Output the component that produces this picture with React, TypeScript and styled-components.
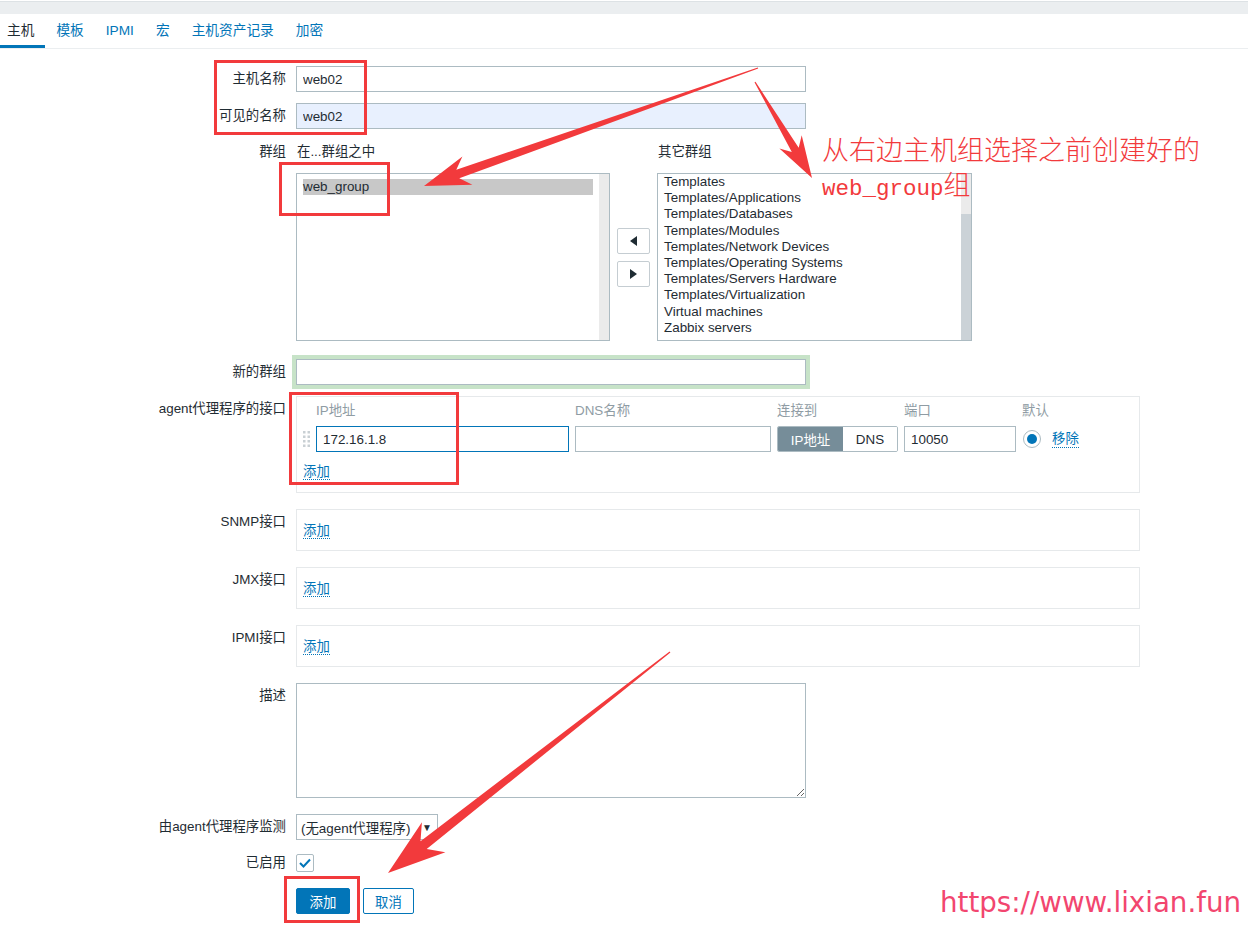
import React from 'react'
import styled, { createGlobalStyle } from 'styled-components'

const GlobalStyle = createGlobalStyle`
  html, body {
    margin: 0;
    padding: 0;
    background: #ffffff;
  }
  body {
    font-family: "Liberation Sans", Arial, "Noto Sans CJK SC", sans-serif;
    font-size: 13.4px;
    color: #1f2c33;
  }
`

const BLUE = '#0275b8'
const BORDER = '#acbbc2'
const MARK = '#f23a3c'

const tabs = ['主机', '模板', 'IPMI', '宏', '主机资产记录', '加密']
const inGroups = ['web_group']
const otherGroups = [
  'Templates',
  'Templates/Applications',
  'Templates/Databases',
  'Templates/Modules',
  'Templates/Network Devices',
  'Templates/Operating Systems',
  'Templates/Servers Hardware',
  'Templates/Virtualization',
  'Virtual machines',
  'Zabbix servers',
]

type Pt = [number, number]

// tapered arrow: thin tail, widening shaft, swept-back head
const arrowPoints = (tail: Pt, tip: Pt, shaft: number, headLen: number, headHalf: number) => {
  const dx = tip[0] - tail[0]
  const dy = tip[1] - tail[1]
  const len = Math.hypot(dx, dy)
  const ux = dx / len
  const uy = dy / len
  const nx = -uy
  const ny = ux
  const neck: Pt = [tip[0] - ux * headLen * 0.78, tip[1] - uy * headLen * 0.78]
  const barb: Pt = [tip[0] - ux * headLen, tip[1] - uy * headLen]
  const p = (b: Pt, w: number) => `${(b[0] + nx * w).toFixed(1)},${(b[1] + ny * w).toFixed(1)}`
  return [
    p(tail, 0.6),
    p(neck, shaft / 2),
    p(barb, headHalf),
    `${tip[0]},${tip[1]}`,
    p(barb, -headHalf),
    p(neck, -shaft / 2),
    p(tail, -0.6),
  ].join(' ')
}

export default function App() {
  return (
    <Page>
      <GlobalStyle />
      <TopStrip />
      <TabBar>
        <TabList>
          {tabs.map((t, i) => (
            <Tab key={t} $active={i === 0}>
              {t}
            </Tab>
          ))}
        </TabList>
      </TabBar>

      <Form>
        <Row $gap={0}>
          <Label>主机名称</Label>
          <TextInput $width={510} defaultValue="web02" />
        </Row>
        <Row $gap={11}>
          <Label>可见的名称</Label>
          <TextInput $width={510} $filled defaultValue="web02" />
        </Row>

        <Row $gap={15}>
          <Label $line={16}>群组</Label>
          <GroupGrid>
            <ListCaption>在...群组之中</ListCaption>
            <span />
            <ListCaption>其它群组</ListCaption>
            <ListBox $width={314}>
              <ListItems $padTop={5}>
                {inGroups.map((g) => (
                  <ListItem key={g} $selected>
                    {g}
                  </ListItem>
                ))}
              </ListItems>
              <ScrollTrack />
            </ListBox>
            <MoveButtons>
              <MoveButton>
                <svg width="7" height="10" viewBox="0 0 7 10">
                  <polygon points="7,0 7,10 0,5" fill="#1f2c33" />
                </svg>
              </MoveButton>
              <MoveButton>
                <svg width="7" height="10" viewBox="0 0 7 10">
                  <polygon points="0,0 0,10 7,5" fill="#1f2c33" />
                </svg>
              </MoveButton>
            </MoveButtons>
            <ListBox $width={315}>
              <ListItems $padTop={0}>
                {otherGroups.map((g) => (
                  <ListItem key={g}>{g}</ListItem>
                ))}
              </ListItems>
              <ScrollTrack>
                <ScrollThumb />
              </ScrollTrack>
            </ListBox>
          </GroupGrid>
        </Row>

        <Row $gap={18}>
          <Label>新的群组</Label>
          <TextInput $width={510} $valid />
        </Row>

        <Row $gap={11}>
          <Label>agent代理程序的接口</Label>
          <InterfaceBox>
            <InterfaceGrid>
              <span />
              <ColHead>IP地址</ColHead>
              <ColHead>DNS名称</ColHead>
              <ColHead>连接到</ColHead>
              <ColHead>端口</ColHead>
              <ColHead>默认</ColHead>

              <DragHandle width="7" height="16" viewBox="0 0 7 16">
                {[0, 4.5, 9, 13.5].map((y) => (
                  <g key={y}>
                    <rect x="0" y={y} width="2.5" height="2.5" fill="#c9d0d4" />
                    <rect x="4.5" y={y} width="2.5" height="2.5" fill="#c9d0d4" />
                  </g>
                ))}
              </DragHandle>
              <TextInput $width={253} $focused defaultValue="172.16.1.8" />
              <TextInput $width={196} />
              <Toggle>
                <ToggleOption $on>IP地址</ToggleOption>
                <ToggleOption>DNS</ToggleOption>
              </Toggle>
              <TextInput $width={112} defaultValue="10050" />
              <DefaultCell>
                <Radio />
                <LinkText>移除</LinkText>
              </DefaultCell>
            </InterfaceGrid>
            <AddLine>
              <LinkText>添加</LinkText>
            </AddLine>
          </InterfaceBox>
        </Row>

        {['SNMP接口', 'JMX接口', 'IPMI接口'].map((name) => (
          <Row key={name} $gap={16}>
            <Label>{name}</Label>
            <EmptyInterface>
              <LinkText>添加</LinkText>
            </EmptyInterface>
          </Row>
        ))}

        <Row $gap={16}>
          <Label>描述</Label>
          <TextArea />
        </Row>

        <Row $gap={16}>
          <Label>由agent代理程序监测</Label>
          <SelectBox>
            <span>(无agent代理程序)</span>
            <SelectArrow>▼</SelectArrow>
          </SelectBox>
        </Row>

        <Row $gap={14}>
          <Label $line={18}>已启用</Label>
          <CheckBox>
            <svg width="14" height="12" viewBox="0 0 14 12">
              <polyline points="2,6 5.5,9.5 12,2.5" fill="none" stroke={BLUE} strokeWidth="2" />
            </svg>
          </CheckBox>
        </Row>

        <Row $gap={16}>
          <span />
          <ButtonRow>
            <PrimaryButton>添加</PrimaryButton>
            <SecondaryButton>取消</SecondaryButton>
          </ButtonRow>
        </Row>
      </Form>

      <Overlay>
        <svg width="1248" height="929" viewBox="0 0 1248 929">
          <g fill="none" stroke={MARK} strokeWidth="3">
            <rect x="215.5" y="61.5" width="150" height="72" />
            <rect x="280.5" y="163.5" width="108" height="51" />
            <rect x="290.5" y="393.5" width="167" height="90" />
            <rect x="285.5" y="877.5" width="73" height="44" />
          </g>
          <g fill={MARK}>
            <polygon points={arrowPoints([758, 68], [424, 186], 9, 46, 15)} />
            <polygon points={arrowPoints([755, 82], [812, 178], 8, 42, 13)} />
            <polygon points={arrowPoints([670, 652], [388, 873], 10, 58, 19)} />
          </g>
        </svg>
        <Note>
          从右边主机组选择之前创建好的
          <br />
          <NoteLatin>web_group</NoteLatin>组
        </Note>
        <Watermark>https://www.lixian.fun</Watermark>
      </Overlay>
    </Page>
  )
}

const Page = styled.div`
  position: relative;
  width: 1248px;
  min-height: 929px;
  overflow: hidden;
`

const TopStrip = styled.div`
  margin-top: 1px;
  height: 12px;
  border-top: 1px solid #dde2e5;
  background: #ebeef0;
`

const TabBar = styled.div`
  height: 34px;
  border-bottom: 1px solid #ebeef0;
`

const TabList = styled.div`
  display: flex;
  margin-left: -4px;
`

const Tab = styled.a<{ $active?: boolean }>`
  display: block;
  padding: 0 11px;
  height: 34px;
  line-height: 34px;
  font-size: 13.7px;
  color: ${(p) => (p.$active ? '#1f2c33' : BLUE)};
  box-shadow: ${(p) => (p.$active ? `inset 0 -3px 0 ${BLUE}` : 'none')};
  cursor: pointer;
`

const Form = styled.div`
  padding-top: 17px;
`

const Row = styled.div<{ $gap: number }>`
  display: grid;
  grid-template-columns: 286px 844px;
  column-gap: 10px;
  align-items: start;
  margin-top: ${(p) => p.$gap}px;
`

const Label = styled.label<{ $line?: number }>`
  text-align: right;
  line-height: ${(p) => p.$line ?? 26}px;
  white-space: nowrap;
`

const TextInput = styled.input<{
  $width: number
  $filled?: boolean
  $focused?: boolean
  $valid?: boolean
}>`
  box-sizing: border-box;
  width: ${(p) => p.$width}px;
  height: 26px;
  padding: 0 6px;
  margin: 0;
  border: 1px solid ${(p) => (p.$focused ? BLUE : BORDER)};
  background: ${(p) => (p.$filled ? '#e8f0fe' : '#ffffff')};
  box-shadow: ${(p) => (p.$valid ? '0 0 0 4px #c7e3c8' : 'none')};
  font: inherit;
  color: #1f2c33;
  outline: none;
`

const GroupGrid = styled.div`
  display: grid;
  grid-template-columns: 314px 33px 315px;
  column-gap: 7px;
  row-gap: 13px;
`

const ListCaption = styled.div`
  line-height: 16px;
  padding-left: 1px;
`

const ListBox = styled.div<{ $width: number }>`
  box-sizing: border-box;
  width: ${(p) => p.$width}px;
  height: 168px;
  border: 1px solid ${BORDER};
  display: flex;
  overflow: hidden;
`

const ListItems = styled.div<{ $padTop: number }>`
  flex: 1;
  padding: ${(p) => p.$padTop}px 6px 0 6px;
`

const ListItem = styled.div<{ $selected?: boolean }>`
  line-height: 16.2px;
  background: ${(p) => (p.$selected ? '#c8c8c8' : 'transparent')};
  white-space: nowrap;
`

const ScrollTrack = styled.div`
  width: 10px;
  background: #ebebeb;
  display: flex;
  flex-direction: column;
`

const ScrollThumb = styled.div`
  margin-top: 40px;
  flex: 1;
  background: #cbd2d7;
`

const MoveButtons = styled.div`
  display: flex;
  flex-direction: column;
  justify-content: center;
  gap: 7px;
`

const MoveButton = styled.button`
  box-sizing: border-box;
  width: 33px;
  height: 26px;
  padding: 0;
  border: 1px solid #c5cdd2;
  border-radius: 2px;
  background: #ffffff;
  display: flex;
  align-items: center;
  justify-content: center;
`

const InterfaceBox = styled.div`
  box-sizing: border-box;
  width: 844px;
  height: 97px;
  border: 1px solid #e6e9eb;
  padding: 6px 6px 0 6px;
`

const InterfaceGrid = styled.div`
  display: grid;
  grid-template-columns: 7px 253px 196px 121px 112px auto;
  column-gap: 6px;
  row-gap: 7px;
  align-items: center;
`

const ColHead = styled.div`
  line-height: 16px;
  color: #8f9ca4;
`

const DragHandle = styled.svg`
  display: block;
`

const Toggle = styled.div`
  box-sizing: border-box;
  height: 26px;
  display: flex;
  border: 1px solid ${BORDER};
  border-radius: 2px;
  overflow: hidden;
`

const ToggleOption = styled.div<{ $on?: boolean }>`
  flex: ${(p) => (p.$on ? '0 0 65px' : '1')};
  display: flex;
  align-items: center;
  justify-content: center;
  background: ${(p) => (p.$on ? '#768d99' : '#ffffff')};
  color: ${(p) => (p.$on ? '#ffffff' : '#1f2c33')};
`

const DefaultCell = styled.div`
  display: flex;
  align-items: center;
  gap: 11px;
  padding-left: 1px;
`

const Radio = styled.span`
  box-sizing: border-box;
  width: 18px;
  height: 18px;
  border-radius: 50%;
  border: 1px solid ${BORDER};
  display: flex;
  align-items: center;
  justify-content: center;
  &::after {
    content: '';
    width: 10px;
    height: 10px;
    border-radius: 50%;
    background: ${BLUE};
  }
`

const LinkText = styled.span`
  color: ${BLUE};
  line-height: 16px;
  border-bottom: 1px dotted ${BLUE};
  cursor: pointer;
`

const AddLine = styled.div`
  margin-top: 12px;
  line-height: 16px;
`

const EmptyInterface = styled.div`
  box-sizing: border-box;
  width: 844px;
  height: 42px;
  border: 1px solid #e6e9eb;
  padding: 13px 6px 0 6px;
  line-height: 16px;
`

const TextArea = styled.textarea`
  box-sizing: border-box;
  width: 510px;
  height: 115px;
  margin: 0;
  border: 1px solid ${BORDER};
  font: inherit;
  resize: both;
  outline: none;
`

const SelectBox = styled.div`
  box-sizing: border-box;
  width: 142px;
  height: 26px;
  border: 1px solid ${BORDER};
  padding: 0 5px 0 4px;
  display: flex;
  align-items: center;
  justify-content: space-between;
  white-space: nowrap;
`

const SelectArrow = styled.span`
  font-size: 10px;
  color: #1f2c33;
`

const CheckBox = styled.span`
  box-sizing: border-box;
  width: 18px;
  height: 18px;
  border: 1px solid ${BORDER};
  border-radius: 2px;
  display: flex;
  align-items: center;
  justify-content: center;
`

const ButtonRow = styled.div`
  display: flex;
  gap: 13px;
`

const PrimaryButton = styled.button`
  box-sizing: border-box;
  width: 54px;
  height: 26px;
  border: 1px solid ${BLUE};
  border-radius: 2px;
  background: ${BLUE};
  color: #ffffff;
  font: inherit;
`

const SecondaryButton = styled(PrimaryButton)`
  width: 51px;
  background: #ffffff;
  color: ${BLUE};
`

const Overlay = styled.div`
  position: absolute;
  inset: 0;
  pointer-events: none;
`

const Note = styled.div`
  position: absolute;
  left: 822px;
  top: 131px;
  font-family: "Noto Sans CJK SC", sans-serif;
  font-weight: 300;
  font-size: 27px;
  line-height: 35px;
  color: ${MARK};
  white-space: nowrap;
`

const NoteLatin = styled.span`
  font-family: "Liberation Mono", monospace;
  font-size: 22.5px;
`

const Watermark = styled.div`
  position: absolute;
  left: 940px;
  top: 889px;
  font-family: "DejaVu Sans", sans-serif;
  font-size: 27.7px;
  line-height: 28px;
  color: #f2466f;
  white-space: nowrap;
`
